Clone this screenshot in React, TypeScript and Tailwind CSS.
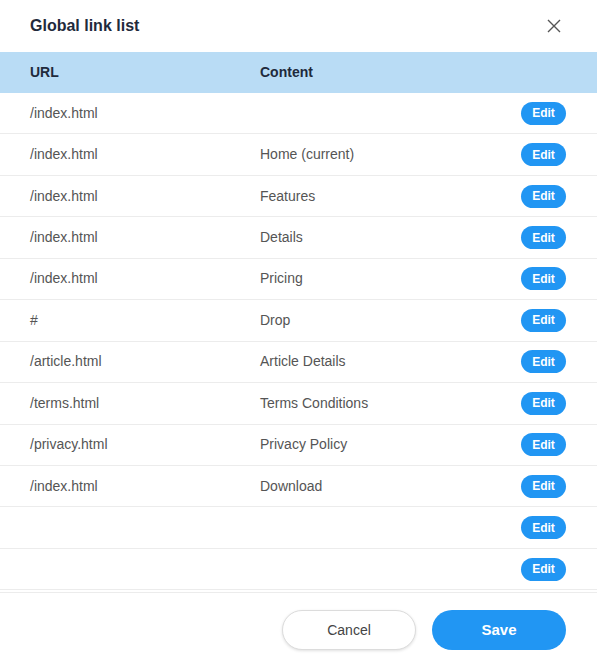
import React from "react";

const ROWS: { url: string; content: string }[] = [
  { url: "/index.html", content: "" },
  { url: "/index.html", content: "Home (current)" },
  { url: "/index.html", content: "Features" },
  { url: "/index.html", content: "Details" },
  { url: "/index.html", content: "Pricing" },
  { url: "#", content: "Drop" },
  { url: "/article.html", content: "Article Details" },
  { url: "/terms.html", content: "Terms Conditions" },
  { url: "/privacy.html", content: "Privacy Policy" },
  { url: "/index.html", content: "Download" },
  { url: "", content: "" },
  { url: "", content: "" },
];

export default function App() {
  return (
    <div
      className="w-[597px] h-[665px] bg-white flex flex-col overflow-hidden"
      style={{ fontFamily: "Arial, 'Liberation Sans', sans-serif" }}
    >
      {/* Header */}
      <div className="h-[52px] shrink-0 flex items-center justify-between pl-[30px] pr-[36px]">
        <div className="text-[16px] font-bold text-[#1f2a3c]">Global link list</div>
        <button className="w-[14px] h-[14px] flex items-center justify-center">
          <svg width="14" height="14" viewBox="0 0 14 14" fill="none" stroke="#555" strokeWidth="1.4">
            <path d="M1 1L13 13M13 1L1 13" />
          </svg>
        </button>
      </div>

      {/* Table */}
      <div className="h-[41px] shrink-0 bg-[#b9dcf5] flex items-center text-[14px] font-bold text-[#1f2a3c]">
        <div className="w-[260px] pl-[30px]">URL</div>
        <div className="flex-1">Content</div>
      </div>
      <div className="flex flex-col">
        {ROWS.map((r, i) => (
          <div
            key={i}
            className="h-[41.45px] shrink-0 flex items-center border-b border-[#ececec] text-[14px] text-[#555]"
          >
            <div className="w-[260px] pl-[30px]">{r.url}</div>
            <div className="flex-1">{r.content}</div>
            <button className="mr-[31px] w-[45px] h-[23px] rounded-full bg-[#2196f3] text-white text-[12px] font-bold leading-none">
              Edit
            </button>
          </div>
        ))}
      </div>

      {/* Footer */}
      <div className="mt-[2px] flex-1 border-t border-[#ececec] flex items-start justify-end gap-4 pt-[17px] pr-[31px]">
        <button className="w-[134px] h-[40px] rounded-full border border-[#dcdcdc] bg-white text-[14px] text-[#444] shadow-[0_1px_3px_rgba(0,0,0,0.12)]">
          Cancel
        </button>
        <button className="w-[134px] h-[40px] rounded-full bg-[#2196f3] text-white text-[15px] font-bold">
          Save
        </button>
      </div>
    </div>
  );
}
